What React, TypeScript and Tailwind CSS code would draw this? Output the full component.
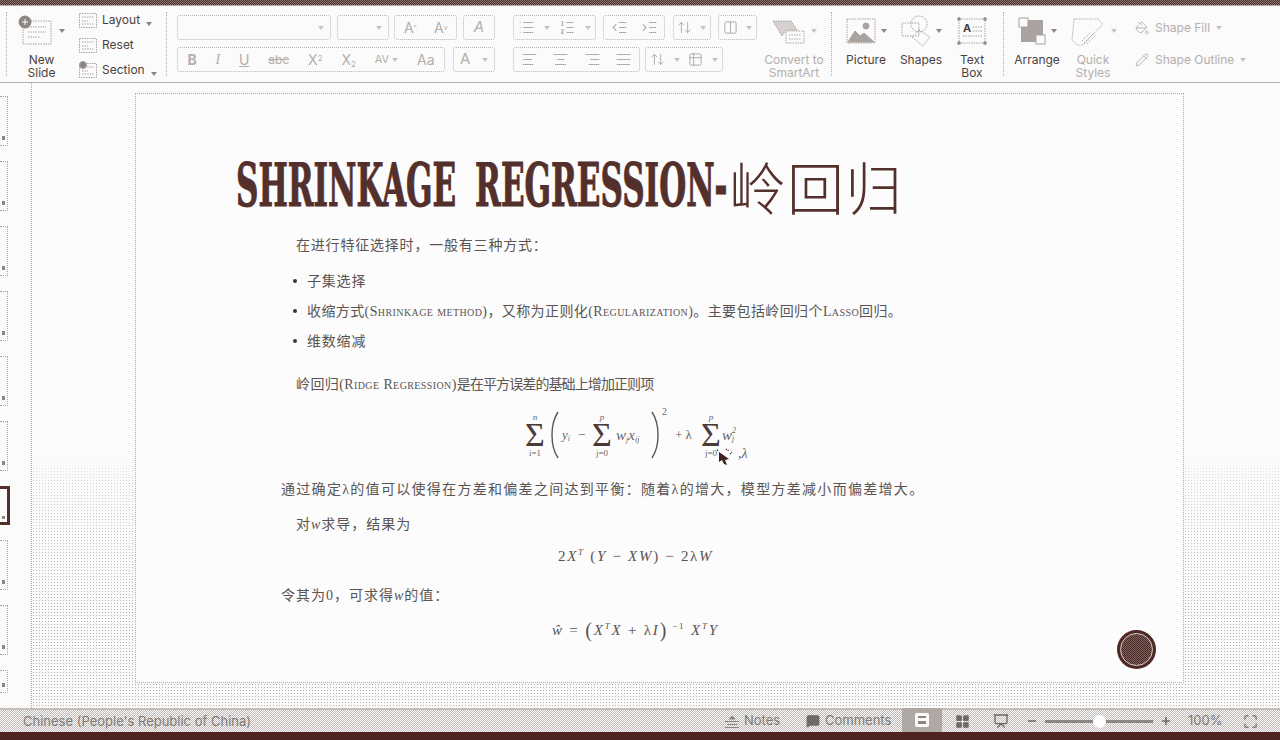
import {
  AlignCenter,
  AlignJustify,
  AlignLeft,
  AlignRight,
  ArrowUpDown,
  Columns2,
  IndentDecrease,
  IndentIncrease,
  List,
  ListOrdered,
  Minus,
  PaintBucket,
  Pencil,
  Plus,
  Presentation,
  LayoutGrid,
  MessageSquare,
  Maximize,
  Table2,
} from "lucide-react"
import type { ReactNode } from "react"

const sans = "font-['Inter','Liberation_Sans',sans-serif]"
const cjk = "font-['Liberation_Serif','Noto_Sans_CJK_SC',serif]"

function Caret({ light = false }: { light?: boolean }) {
  return (
    <span
      className={`inline-block h-0 w-0 border-x-[3px] border-t-[4px] border-x-transparent ${
        light ? "border-t-[#c9c3c0]" : "border-t-[#8d8582]"
      }`}
    />
  )
}

function Sep() {
  return <div className="mt-[6px] h-[64px] border-l border-dotted border-[#b5aeaa]" />
}

function Box({ className, children }: { className: string; children?: ReactNode }) {
  return (
    <div
      className={`flex items-center justify-around rounded-[3px] border border-dotted border-[#bdb6b2] text-[#b5aeaa] ${className}`}
    >
      {children}
    </div>
  )
}

const dotted = { size: 17, strokeWidth: 1.5, strokeDasharray: "1.5 1", color: "#b0a8a4" }

function BigBtn({
  icon,
  label,
  width,
  gray = false,
  caret = true,
}: {
  icon: ReactNode
  label: ReactNode
  width: string
  gray?: boolean
  caret?: boolean
}) {
  return (
    <div className={`flex flex-col items-center ${width}`}>
      <div className="flex h-[47px] items-center gap-[5px] pt-[2px]">
        {icon}
        {caret && <Caret light={gray} />}
      </div>
      <div
        className={`text-center text-[12px] leading-[13px] ${sans} ${gray ? "text-[#b5aeaa]" : "text-[#4c4240]"}`}
      >
        {label}
      </div>
    </div>
  )
}

function SmallBtn({ icon, label, caret = false }: { icon: ReactNode; label: string; caret?: boolean }) {
  return (
    <div className="flex h-[25px] items-center">
      <div className="w-[24px]">{icon}</div>
      <span className={`text-[12px] text-[#4c4240] ${sans}`}>{label}</span>
      {caret && (
        <span className="ml-[6px]">
          <Caret />
        </span>
      )}
    </div>
  )
}

function MiniSheet({ gear = false }: { gear?: boolean }) {
  return (
    <svg width="20" height="20" viewBox="0 0 20 20" fill="none" stroke="#aaa29e" strokeDasharray="1.5 1">
      <rect x="1.5" y="3.5" width="17" height="14" />
      <path d="M4 7h12M4 11h6M4 14h12" />
      {gear && <circle cx="5" cy="5" r="3.5" fill="#8d8582" strokeDasharray="none" />}
    </svg>
  )
}

function Ribbon() {
  return (
    <div className="flex h-[77px] shrink-0 border-b border-[#b5aeaa] bg-[#fbfbfb] pl-[6px]">
      <Sep />
      <div className="ml-[2px]">
        <BigBtn
          width="w-[65px]"
          icon={
            <svg width="36" height="32" viewBox="0 0 36 32" fill="none" stroke="#aaa29e" strokeDasharray="1.5 1">
              <rect x="5" y="6" width="28" height="23" />
              <path d="M10 12h18M10 17h18M10 22h12" />
              <circle cx="7" cy="7" r="6" fill="#8d8582" stroke="#8d8582" strokeDasharray="none" />
              <path d="M7 4v6M4 7h6" stroke="#fbfbfb" strokeDasharray="none" />
            </svg>
          }
          label={
            <>
              New
              <br />
              Slide
            </>
          }
        />
      </div>
      <div className="ml-[4px] flex w-[88px] flex-col pt-[1px]">
        <SmallBtn icon={<MiniSheet />} label="Layout" caret />
        <SmallBtn icon={<MiniSheet />} label="Reset" />
        <SmallBtn icon={<MiniSheet gear />} label="Section" caret />
      </div>
      <Sep />

      <div className={`ml-[10px] flex w-[318px] flex-col gap-[7px] pt-[9px] ${sans}`}>
        <div className="flex h-[25px] justify-between">
          <Box className="w-[154px] justify-end! pr-[6px]">
            <Caret light />
          </Box>
          <Box className="w-[52px] justify-end! pr-[6px]">
            <Caret light />
          </Box>
          <Box className="w-[63px] text-[14px]">
            <span>
              A<sup className="text-[7px]">^</sup>
            </span>
            <span>
              A<sup className="text-[7px]">v</sup>
            </span>
          </Box>
          <Box className="w-[32px] text-[15px]">
            <span className="italic">A</span>
          </Box>
        </div>
        <div className="flex h-[25px] justify-between">
          <Box className="w-[268px] text-[14px]">
            <span className="font-bold">B</span>
            <span className="font-['Liberation_Serif'] italic">I</span>
            <span className="underline">U</span>
            <span className="text-[12px] line-through">abc</span>
            <span>
              X<sup className="text-[8px]">2</sup>
            </span>
            <span>
              X<sub className="text-[8px]">2</sub>
            </span>
            <span className="flex items-center gap-[3px] text-[11px]">
              AV
              <Caret light />
            </span>
            <span>Aa</span>
          </Box>
          <Box className="w-[42px] text-[15px]">
            <span>A</span>
            <Caret light />
          </Box>
        </div>
      </div>

      <div className="ml-[18px] flex w-[244px] flex-col gap-[7px] pt-[9px]">
        <div className="flex h-[25px] justify-between">
          <Box className="w-[83px]">
            <List {...dotted} />
            <Caret light />
            <ListOrdered {...dotted} />
            <Caret light />
          </Box>
          <Box className="w-[62px]">
            <IndentDecrease {...dotted} />
            <IndentIncrease {...dotted} />
          </Box>
          <Box className="w-[38px]">
            <ArrowUpDown {...dotted} size={15} />
            <Caret light />
          </Box>
          <Box className="w-[39px]">
            <Columns2 {...dotted} size={15} />
            <Caret light />
          </Box>
        </div>
        <div className="flex h-[25px] gap-[5px]">
          <Box className="w-[127px]">
            <AlignLeft {...dotted} />
            <AlignCenter {...dotted} />
            <AlignRight {...dotted} />
            <AlignJustify {...dotted} />
          </Box>
          <Box className="w-[78px]">
            <ArrowUpDown {...dotted} size={15} />
            <Caret light />
            <Table2 {...dotted} size={15} />
            <Caret light />
          </Box>
        </div>
      </div>

      <BigBtn
        width="w-[74px]"
        gray
        icon={
          <svg width="34" height="30" viewBox="0 0 34 30" fill="none" stroke="#aaa29e" strokeDasharray="1.5 1">
            <path d="M1 5h18l6 9H14l-4 6z" fill="#d6d1ce" />
            <rect x="14" y="15" width="18" height="12" />
            <path d="M17 19h12M17 23h12" />
          </svg>
        }
        label={
          <>
            Convert to
            <br />
            SmartArt
          </>
        }
      />
      <Sep />

      <div className="ml-[10px] flex">
        <BigBtn
          width="w-[48px]"
          icon={
            <svg width="30" height="26" viewBox="0 0 30 26" fill="none" stroke="#aaa29e">
              <rect x="1" y="1" width="28" height="24" strokeDasharray="1.5 1" />
              <path d="M2 24l7-11 5 5 4-3 10 9z" fill="#aaa29e" />
              <circle cx="20" cy="8" r="3" fill="#aaa29e" />
            </svg>
          }
          label="Picture"
        />
        <BigBtn
          width="w-[62px]"
          icon={
            <svg width="30" height="32" viewBox="0 0 30 32" fill="none" stroke="#aaa29e" strokeDasharray="1.5 1">
              <rect x="1" y="8" width="17" height="13" />
              <circle cx="18" cy="9" r="8" />
              <path d="M18 15l11 7-7 9-11-9z" />
            </svg>
          }
          label="Shapes"
        />
        <BigBtn
          width="w-[40px]"
          caret={false}
          icon={
            <svg width="30" height="28" viewBox="0 0 30 28" fill="none" stroke="#aaa29e" strokeDasharray="1.5 1">
              <rect x="2" y="2" width="26" height="24" />
              <path d="M16 10h9M16 14h9M6 19h19" />
              <circle cx="2" cy="2" r="1.5" fill="#8d8582" strokeDasharray="none" />
              <circle cx="28" cy="2" r="1.5" fill="#8d8582" strokeDasharray="none" />
              <circle cx="2" cy="26" r="1.5" fill="#8d8582" strokeDasharray="none" />
              <circle cx="28" cy="26" r="1.5" fill="#8d8582" strokeDasharray="none" />
              <text x="6" y="15" fontSize="11" fontWeight="700" fill="#4c4240" stroke="none" fontFamily="Inter">
                A
              </text>
            </svg>
          }
          label={
            <>
              Text
              <br />
              Box
            </>
          }
        />
      </div>
      <div className="ml-[11px]">
        <Sep />
      </div>

      <div className="ml-[8px] flex">
        <BigBtn
          width="w-[50px]"
          icon={
            <svg width="28" height="28" viewBox="0 0 28 28" fill="none">
              <rect x="3" y="3" width="22" height="22" fill="#aaa29e" />
              <rect x="1" y="1" width="9" height="9" fill="#fbfbfb" stroke="#aaa29e" />
              <rect x="18" y="18" width="9" height="9" fill="#fbfbfb" stroke="#aaa29e" />
            </svg>
          }
          label="Arrange"
        />
        <BigBtn
          width="w-[62px]"
          gray
          icon={
            <svg width="36" height="30" viewBox="0 0 36 30" fill="none" stroke="#b5aeaa" strokeDasharray="1.5 1">
              <path d="M4 3h24l5 5L13 29H7L2 24z" />
              <path d="M14 27l10-10M17 28l9-9M12 25l9-9" />
            </svg>
          }
          label={
            <>
              Quick
              <br />
              Styles
            </>
          }
        />
      </div>

      <div className={`ml-[11px] flex flex-col gap-[10px] pt-[11px] text-[12px] text-[#b5aeaa] ${sans}`}>
        <div className="flex h-[22px] items-center gap-[6px]">
          <PaintBucket {...dotted} size={14} />
          <span>Shape Fill</span>
          <Caret light />
        </div>
        <div className="flex h-[22px] items-center gap-[6px]">
          <Pencil {...dotted} size={14} />
          <span>Shape Outline</span>
          <Caret light />
        </div>
      </div>
    </div>
  )
}

function Thumbs() {
  const tops = ["h-[50px]", "h-[50px]", "h-[50px]", "h-[50px]", "h-[50px]", "h-[50px]"]
  return (
    <div className="flex w-[32px] shrink-0 flex-col border-r border-dotted border-[#aaa29e] pt-[13px]">
      {tops.map((h, i) => (
        <Thumb key={i} className={h} />
      ))}
      <div className="mb-[15px] flex h-[54px] w-[10px] items-end border-y-[3px] border-r-[3px] border-[#54302c] pb-[3px] pl-[2px]">
        <span className="h-[3px] w-[3px] bg-[#8d8582]" />
      </div>
      <Thumb className="h-[50px]" />
      <Thumb className="h-[50px]" />
      <Thumb className="h-[23px]" />
    </div>
  )
}

function Thumb({ className }: { className: string }) {
  return (
    <div
      className={`mb-[15px] flex w-[8px] shrink-0 items-end border-y border-r border-dotted border-[#aaa29e] pb-[5px] pl-[2px] ${className}`}
    >
      <span className="h-[4px] w-[3px] bg-[#8d8582]" />
    </div>
  )
}

function Row({ className, children }: { className: string; children: ReactNode }) {
  return <div className={`flex h-[20px] items-center whitespace-nowrap ${className}`}>{children}</div>
}

function Caps({ children }: { children: ReactNode }) {
  return <span className="[font-variant-caps:small-caps]">{children}</span>
}

function Sum({ top, bottom }: { top: string; bottom: string }) {
  return (
    <div className="flex w-[22px] flex-col items-center font-['Liberation_Serif',serif]">
      <span className="h-[10px] text-[9px] italic leading-[10px]">{top}</span>
      <span className="h-[26px] text-[34px] leading-[26px] text-[#4a3a38]">Σ</span>
      <span className="h-[10px] whitespace-nowrap text-[9px] leading-[10px]">{bottom}</span>
    </div>
  )
}

function Paren({ flip = false }: { flip?: boolean }) {
  return (
    <svg width="10" height="48" viewBox="0 0 10 48" fill="none" stroke="#5c5654" strokeWidth="1.4">
      <path d={flip ? "M2 1c8 12 8 34 0 46" : "M8 1c-8 12-8 34 0 46"} />
    </svg>
  )
}

function Slide() {
  return (
    <div
      className={`relative h-[590px] w-[1049px] shrink-0 border border-dotted border-[#b5aeaa] bg-[#fcfcfc] text-[14px] text-[#5a5452] ${cjk}`}
    >
      <div className="ml-[100px] mt-[59px] flex h-[64px] items-center whitespace-nowrap text-[#54302c]">
        <span className="inline-block w-[490px] origin-left scale-x-[0.575] font-['DejaVu_Serif_Condensed','DejaVu_Serif',serif] text-[60px] font-bold leading-none [word-spacing:14px] [-webkit-text-stroke:1px_#54302c]">
          SHRINKAGE REGRESSION-
        </span>
        <span className="ml-[3px] font-['Noto_Sans_CJK_SC',sans-serif] text-[57px] font-light leading-none tracking-[1px]">
          岭回归
        </span>
      </div>

      <Row className="ml-[160px] mt-[18px] tracking-[0.8px]">在进行特征选择时，一般有三种方式：</Row>

      <Row className="ml-[171px] mt-[16px] tracking-[0.8px]">
        <span className="-ml-[14px] mr-[10px] h-[4px] w-[4px] rounded-full bg-[#3f3836]" />
        子集选择
      </Row>
      <Row className="ml-[171px] mt-[10px] tracking-[0.4px]">
        <span className="-ml-[14px] mr-[10px] h-[4px] w-[4px] rounded-full bg-[#3f3836]" />
        收缩方式(<Caps>Shrinkage method</Caps>)，又称为正则化(<Caps>Regularization</Caps>)。主要包括岭回归个
        <Caps>Lasso</Caps>回归。
      </Row>
      <Row className="ml-[171px] mt-[10px] tracking-[0.8px]">
        <span className="-ml-[14px] mr-[10px] h-[4px] w-[4px] rounded-full bg-[#3f3836]" />
        维数缩减
      </Row>

      <Row className="ml-[160px] mt-[23px] tracking-[0.4px]">
        岭回归(<Caps>Ridge Regression</Caps>)<span className="tracking-[-0.9px]">是在平方误差的基础上增加正则项</span>
      </Row>

      {/* ridge cost function */}
      <div className="ml-[388px] mt-[6px] flex h-[70px] items-center whitespace-nowrap font-['Liberation_Serif',serif] text-[#6a6462]">
        <Sum top="n" bottom="i=1" />
        <span className="ml-[4px]">
          <Paren />
        </span>
        <span className="ml-[2px] w-[13px] text-[13px] italic">
          y<sub className="text-[8px]">i</sub>
        </span>
        <span className="ml-[3px] w-[10px] text-[13px]">−</span>
        <span className="ml-[3px]">
          <Sum top="p" bottom="j=0" />
        </span>
        <span className="ml-[3px] w-[34px] text-[15px] italic">
          w<sub className="text-[8px]">j</sub>x<sub className="text-[8px]">ij</sub>
        </span>
        <Paren flip />
        <span className="-mt-[46px] ml-[2px] w-[8px] text-[10px] leading-none">2</span>
        <span className="ml-[5px] w-[25px] text-[13px]">+ λ</span>
        <Sum top="p" bottom="j=0" />
        <span className="flex w-[16px] items-center text-[15px] italic">
          w
          <span className="flex flex-col text-[8px] leading-[8px]">
            <span>2</span>
            <span>j</span>
          </span>
        </span>
        <span className="mt-[38px] w-[16px] text-[14px] italic leading-none">,λ</span>
      </div>

      <Row className="ml-[145px] mt-[9px] tracking-[1.3px]">
        通过确定λ的值可以使得在方差和偏差之间达到平衡：随着λ的增大，模型方差减小而偏差增大。
      </Row>
      <Row className="ml-[160px] mt-[15px] tracking-[1px]">
        对<i>w</i>求导，结果为
      </Row>
      <Row className="ml-[422px] mt-[12px] text-[15px] tracking-[1.7px] font-['Liberation_Serif',serif]">
        2<i>X</i>
        <sup className="text-[9px]">
          <i>T</i>
        </sup>
        &nbsp;(<i>Y</i>&nbsp;−&nbsp;<i>XW</i>)&nbsp;−&nbsp;2λ<i>W</i>
      </Row>
      <Row className="ml-[145px] mt-[19px] tracking-[1px]">
        令其为0，可求得<i>w</i>的值：
      </Row>
      <Row className="ml-[416px] mt-[15px] text-[15px] tracking-[1.8px] font-['Liberation_Serif',serif]">
        <i>ŵ</i>&nbsp;=&nbsp;<span className="text-[20px] font-light">(</span>
        <i>X</i>
        <sup className="text-[9px]">
          <i>T</i>
        </sup>
        <i>X</i>&nbsp;+&nbsp;λ<i>I</i>
        <span className="text-[20px] font-light">)</span>
        <sup className="text-[9px]">&nbsp;−1</sup>&nbsp;<i>X</i>
        <sup className="text-[9px]">
          <i>T</i>
        </sup>
        <i>Y</i>
      </Row>

      {/* recording indicator */}
      <div className="absolute left-[981px] top-[536px] flex h-[39px] w-[39px] items-center justify-center rounded-full bg-[#4f2a24]">
        <div className="h-[33px] w-[33px] rounded-full border border-[#d8d2cf] bg-[image:repeating-conic-gradient(#4f2a24_0_25%,#7a625e_0_50%)] bg-[length:2px_2px]" />
      </div>

      {/* mouse pointer */}
      <svg className="absolute left-[580px] top-[353px]" width="18" height="20" viewBox="0 0 18 20">
        <path d="M3 5l10 7-4 1 2 5-3-1-2-4-3 2z" fill="#3f201c" />
        <path d="M10 2l3 2M1 3l2 1M14 7l2-2" stroke="#3f201c" strokeWidth="1.5" strokeDasharray="1 1" />
      </svg>
    </div>
  )
}

function StatusBar() {
  return (
    <div
      className={`flex h-[24px] shrink-0 items-center border-t-2 border-[#c4bdb9] bg-[image:repeating-conic-gradient(#c0bab6_0_25%,#fbfbfb_0_50%)] bg-[length:2px_2px] pl-[23px] text-[13px] text-[#817a77] ${sans}`}
    >
      <span className="w-[702px] pt-[1px]">Chinese (People's Republic of China)</span>
      <svg width="14" height="13" viewBox="0 0 14 13" fill="none" stroke="#8d8582">
        <path d="M4 4l3-3 3 3z" fill="#8d8582" />
        <path d="M0 6.5h14M2 9.5h10M0 12.5h14" />
      </svg>
      <span className="ml-[5px] w-[62px]">Notes</span>
      <MessageSquare size={14} fill="#6f6967" className="text-[#6f6967]" />
      <span className="ml-[5px] w-[77px]">Comments</span>
      <div className="-mt-[2px] flex h-[24px] w-[40px] items-center justify-center bg-[#b0a8a4]">
        <svg width="16" height="16" viewBox="0 0 16 16">
          <rect x="1" y="1" width="14" height="14" rx="2" fill="#fbfbfb" />
          <rect x="4" y="4" width="8" height="2" fill="#8d8582" />
          <rect x="4" y="9" width="8" height="3" fill="#8d8582" />
        </svg>
      </div>
      <LayoutGrid size={15} fill="#6f6967" className="ml-[13px] text-[#6f6967]" />
      <Presentation size={16} className="ml-[23px] text-[#6f6967]" />
      <Minus size={12} strokeWidth={3} className="ml-[17px] text-[#6f6967]" />
      <div className="ml-[7px] flex w-[108px] items-center">
        <div className="h-[3px] flex-1 bg-[#8d8582]" />
        <div className="h-[13px] w-[13px] rounded-full bg-white" />
        <div className="h-[3px] flex-1 bg-[#8d8582]" />
      </div>
      <Plus size={12} strokeWidth={3} className="ml-[7px] text-[#6f6967]" />
      <span className="ml-[16px] w-[40px]">100%</span>
      <Maximize size={15} className="ml-[15px] text-[#6f6967]" />
    </div>
  )
}

export default function App() {
  return (
    <div className="flex h-[740px] w-[1280px] flex-col overflow-hidden bg-[#fbfbfb]">
      <div className="h-[6px] shrink-0 border-b border-[#b5aeaa] bg-[image:repeating-conic-gradient(#4f2a24_0_25%,#8a7a76_0_50%)] bg-[length:2px_2px]" />
      <Ribbon />
      <div className="flex min-h-0 flex-1">
        <Thumbs />
        <div className="min-w-0 flex-1 bg-[image:linear-gradient(to_bottom,#fbfbfb_0,#fbfbfb_60%,rgba(251,251,251,0.5)_63%,transparent_85%),radial-gradient(#b5aeaa_0.7px,transparent_0.8px)] bg-[length:100%_100%,3px_3px] pl-[103px] pt-[10px]">
          <Slide />
        </div>
      </div>
      <StatusBar />
      <div className="h-[8px] shrink-0 bg-[#4f2420]" />
    </div>
  )
}
